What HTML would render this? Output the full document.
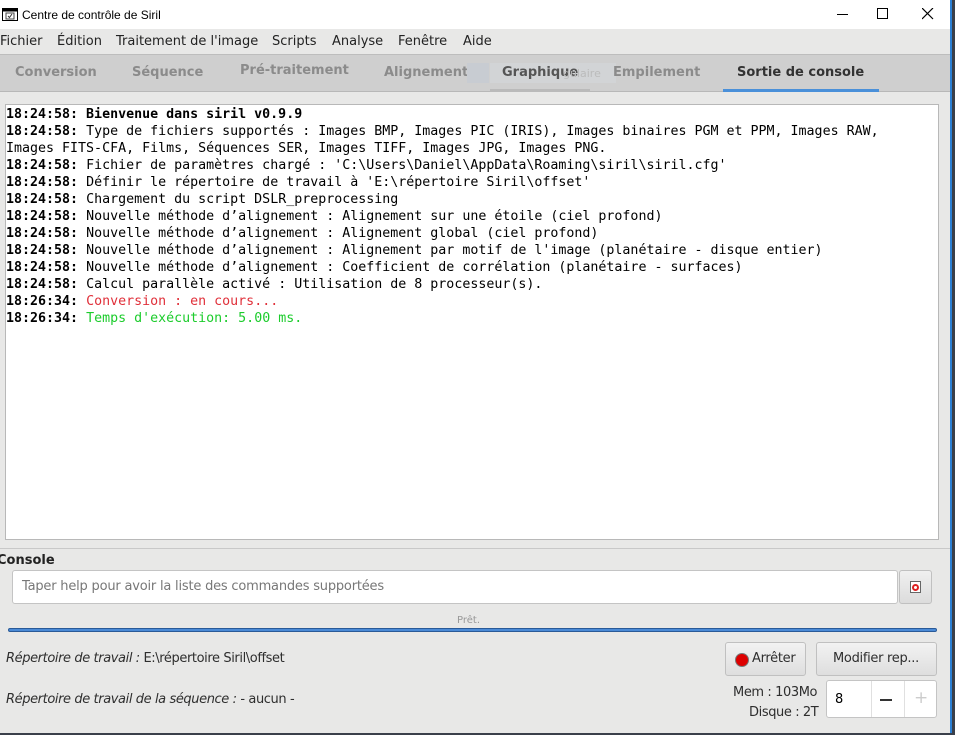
<!DOCTYPE html>
<html><head><meta charset="utf-8"><style>
*{box-sizing:border-box;margin:0;padding:0}
body{width:955px;height:735px;overflow:hidden;background:#3a3f4a;font-family:"DejaVu Sans","Liberation Sans",sans-serif;position:relative}
.win{position:absolute;left:0;top:0;width:952px;height:733px;background:#e8e8e7;border-right:2px solid #2b7fd4}
.title{position:absolute;left:0;top:0;width:950px;height:29px;background:#fff;font-family:"Liberation Sans",sans-serif;font-size:12px;color:#000}
.title .t{position:absolute;left:22px;top:8px}
.menu{position:absolute;top:29px;left:0;width:950px;height:25px;background:#e8e8e7;font-size:13px;color:#222}
.menu span{position:absolute;top:5px}
.tabs{position:absolute;top:54px;left:0;width:950px;height:38px;background:#cfcfcf;border-top:1px solid #bdbdbd;border-bottom:1px solid #b8b8b8;font-size:13px;font-weight:bold;color:#8b8b8b}
.tabs span{position:absolute;top:10px}
.log{position:absolute;left:5px;top:104px;width:934px;height:436px;background:#fff;border:1px solid #b8b8b8;font-family:"DejaVu Sans Mono","Liberation Mono",monospace;font-size:13.3px;line-height:17px;color:#000;padding:1px 0 0 0;white-space:pre}
.log b{font-weight:bold}
.r{color:#e0303a}.g{color:#1ccc2c}
.s{font-size:13px;color:#2e2e2e;letter-spacing:-0.4px}
</style></head><body>
<div class="win">
<div class="title">
<svg style="position:absolute;left:2px;top:8px" width="16" height="13"><rect x="0.5" y="0.5" width="15" height="12" fill="#fff" stroke="#000"/><rect x="0.5" y="0.5" width="15" height="3" fill="#000"/><rect x="4" y="5" width="8" height="6" fill="none" stroke="#444"/><path d="M6 8l1.5 1.5L10 6" stroke="#333" fill="none"/></svg>
<span class="t">Centre de contrôle de Siril</span>
<div style="position:absolute;left:837px;top:14px;width:11px;height:1px;background:#000"></div>
<div style="position:absolute;left:877px;top:8px;width:11px;height:11px;border:1px solid #000"></div>
<svg style="position:absolute;left:922px;top:8px" width="12" height="12"><path d="M0 0L11 11M11 0L0 11" stroke="#000" stroke-width="1.2"/></svg>
</div>
<div class="menu">
<span style="left:0">Fichier</span><span style="left:57px">Édition</span><span style="left:116px">Traitement de l'image</span><span style="left:272px">Scripts</span><span style="left:332px">Analyse</span><span style="left:398px">Fenêtre</span><span style="left:463px">Aide</span>
</div>
<div class="tabs">
<span style="left:15px">Conversion</span><span style="left:132px">Séquence</span><span style="left:240px;top:8px">Pré-traitement</span><span style="left:384px">Alignement</span>
<div style="position:absolute;left:467px;top:8px;width:22px;height:20px;background:#c8ccd2"></div>
<div style="position:absolute;left:490px;top:8px;width:126px;height:20px;background:#d2d4d6"></div>
<span style="left:502px;color:#555">Graphique</span><span style="left:563px;font-weight:normal;font-size:11px;top:12px;color:#bbb">gulaire</span>
<span style="left:613px">Empilement</span>
<div style="position:absolute;left:490px;top:34px;width:100px;height:3px;background:#bababa"></div>
<span style="left:737px;color:#333">Sortie de console</span>
<div style="position:absolute;left:723px;top:34px;width:156px;height:3px;background:#4a90d9"></div>
</div>
<div class="log"><b>18:24:58: Bienvenue dans siril v0.9.9</b>
<b>18:24:58:</b> Type de fichiers supportés : Images BMP, Images PIC (IRIS), Images binaires PGM et PPM, Images RAW,
Images FITS-CFA, Films, Séquences SER, Images TIFF, Images JPG, Images PNG.
<b>18:24:58:</b> Fichier de paramètres chargé : 'C:\Users\Daniel\AppData\Roaming\siril\siril.cfg'
<b>18:24:58:</b> Définir le répertoire de travail à 'E:\répertoire Siril\offset'
<b>18:24:58:</b> Chargement du script DSLR_preprocessing
<b>18:24:58:</b> Nouvelle méthode d’alignement : Alignement sur une étoile (ciel profond)
<b>18:24:58:</b> Nouvelle méthode d’alignement : Alignement global (ciel profond)
<b>18:24:58:</b> Nouvelle méthode d’alignement : Alignement par motif de l'image (planétaire - disque entier)
<b>18:24:58:</b> Nouvelle méthode d’alignement : Coefficient de corrélation (planétaire - surfaces)
<b>18:24:58:</b> Calcul parallèle activé : Utilisation de 8 processeur(s).
<b>18:26:34:</b> <span class="r">Conversion : en cours...</span>
<b>18:26:34:</b> <span class="g">Temps d'exécution: 5.00 ms.</span></div>
<div style="position:absolute;left:0;top:548px;width:950px;height:1px;background:#c8c8c8"></div>
<div style="position:absolute;left:-3px;top:553px;font-size:13px;font-weight:bold;color:#222">Console</div>
<div style="position:absolute;left:12px;top:570px;width:886px;height:34px;background:#fff;border:1px solid #c4c4c4;border-radius:3px;font-size:13px;color:#777;padding:8px 0 0 9px;letter-spacing:-0.2px">Taper help pour avoir la liste des commandes supportées</div>
<div style="position:absolute;left:899px;top:570px;width:33px;height:34px;background:linear-gradient(#f0f0f0,#dcdcdc);border:1px solid #c0c0c0;border-radius:3px">
<div style="position:absolute;left:10px;top:10px;width:11px;height:12px;border:1px solid #666;background:#fff"><div style="position:absolute;left:1px;top:2px;width:7px;height:7px;border:2px solid #d22;border-radius:50%"></div></div></div>
<div style="position:absolute;left:457px;top:615px;font-size:10px;color:#999">Prêt.</div>
<div style="position:absolute;left:8px;top:628px;width:929px;height:4px;background:#4a8ad6;border:1px solid #2a5a98;border-radius:2px"></div>
<div class="s" style="position:absolute;left:6px;top:651px"><i>Répertoire de travail :</i> E:\répertoire Siril\offset</div>
<div class="s" style="position:absolute;left:6px;top:692px"><i>Répertoire de travail de la séquence :</i> - aucun -</div>
<div style="position:absolute;left:725px;top:642px;width:81px;height:34px;background:linear-gradient(#f2f2f2,#dedede);border:1px solid #c0c0c0;border-radius:3px;font-size:13px;color:#2e2e2e;padding:8px 0 0 26px;letter-spacing:-0.3px">Arrêter
<div style="position:absolute;left:9px;top:10px;width:14px;height:14px;border-radius:50%;background:#d00;border:1px solid #777"></div></div>
<div style="position:absolute;left:816px;top:642px;width:121px;height:34px;background:linear-gradient(#f2f2f2,#dedede);border:1px solid #c0c0c0;border-radius:3px;font-size:13px;color:#2e2e2e;padding:8px 0 0 16px;letter-spacing:-0.3px">Modifier rep...</div>
<div class="s" style="position:absolute;left:733px;top:685px">Mem : 103Mo</div>
<div class="s" style="position:absolute;left:749px;top:705px">Disque : 2T</div>
<div style="position:absolute;left:826px;top:680px;width:111px;height:38px;background:#fff;border:1px solid #c4c4c4;border-radius:3px;font-size:13px">
<span style="position:absolute;left:8px;top:11px">8</span>
<div style="position:absolute;left:44px;top:0;width:1px;height:36px;background:#e0e0e0"></div>
<div style="position:absolute;left:77px;top:0;width:1px;height:36px;background:#e0e0e0"></div>
<div style="position:absolute;left:53px;top:18px;width:12px;height:2px;background:#333"></div>
<span style="position:absolute;left:87px;top:7px;color:#ccc;font-size:17px">+</span>
</div>
</div>
</body></html>
